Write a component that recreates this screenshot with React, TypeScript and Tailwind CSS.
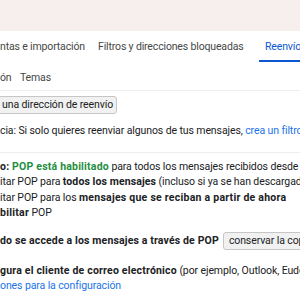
export default function App() {
  const font = { fontFamily: "Roboto, 'Noto Sans', sans-serif" };
  return (
    <div className="w-[300px] h-[300px] overflow-hidden bg-white text-[#202124] text-[10.5px] tracking-[-0.1px]" style={font}>
      <div className="h-[31px] bg-[#f7efed]" />
      <div className="flex items-end h-[31px] text-[10.5px] tracking-[-0.15px] text-[#444746] whitespace-nowrap">
        <div className="shrink-0 pb-[7px] w-[98px]">ntas e importación</div>
        <div className="shrink-0 pb-[7px] w-[161px]">Filtros y direcciones bloqueadas</div>
        <div className="shrink-0 pb-[5px] pl-[6px] w-[60px] text-[#0b57d0] border-b-[2px] border-[#0b57d0]">Reenvío</div>
      </div>
      <div className="flex items-center pt-[3px] h-[29px] text-[10.5px] tracking-[-0.15px] text-[#444746] border-b border-[#eeeeee] whitespace-nowrap">
        <div className="shrink-0 w-[20px]">ón</div>
        <div className="shrink-0">Temas</div>
      </div>
      <div className="pt-[5px]">
        <div className="inline-block -ml-[2px] px-[3px] h-[18px] leading-[16px] bg-[#f1f1f1] border border-[#c6c6c6] rounded-[3px] whitespace-nowrap">
          una dirección de reenvío
        </div>
      </div>
      <div className="mt-[10px] whitespace-nowrap leading-[14px]">
        cia: Si solo quieres reenviar algunos de tus mensajes, <span className="text-[#1a73e8]">crea un filtro</span>
      </div>
      <div className="mt-[14px] border-t border-[#eeeeee] pt-[6px] leading-[15.4px] whitespace-nowrap">
        <div>
          <span className="font-bold tracking-[0.2px]">o: </span>
          <span className="font-bold tracking-[0.2px] text-[#1e8e3e]">POP está habilitado</span> para todos los mensajes recibidos desde
        </div>
        <div>
          itar POP para <span className="font-bold tracking-[0.1px]">todos los mensajes</span> (incluso si ya se han descargado)
        </div>
        <div>
          itar POP para los <span className="font-bold tracking-[0.25px]">mensajes que se reciban a partir de ahora</span>
        </div>
        <div>
          <span className="font-bold tracking-[0.25px]">bilitar</span> POP
        </div>
      </div>
      <div className="flex items-center mt-[11px] h-[18px] whitespace-nowrap">
        <span className="shrink-0 font-bold tracking-[0.15px]">do se accede a los mensajes a través de POP</span>
        <div className="shrink-0 ml-[4px] px-[5px] h-[18px] leading-[16px] bg-[#f1f1f1] border border-[#c6c6c6] rounded-[3px]">
          conservar la copia de Gmail
        </div>
      </div>
      <div className="mt-[13px] leading-[15.4px] whitespace-nowrap">
        <div>
          <span className="font-bold tracking-[0.2px]">gura el cliente de correo electrónico</span> (por ejemplo, Outlook, Eudora)
        </div>
        <div className="text-[#1a73e8]">ones para la configuración</div>
      </div>
    </div>
  );
}
